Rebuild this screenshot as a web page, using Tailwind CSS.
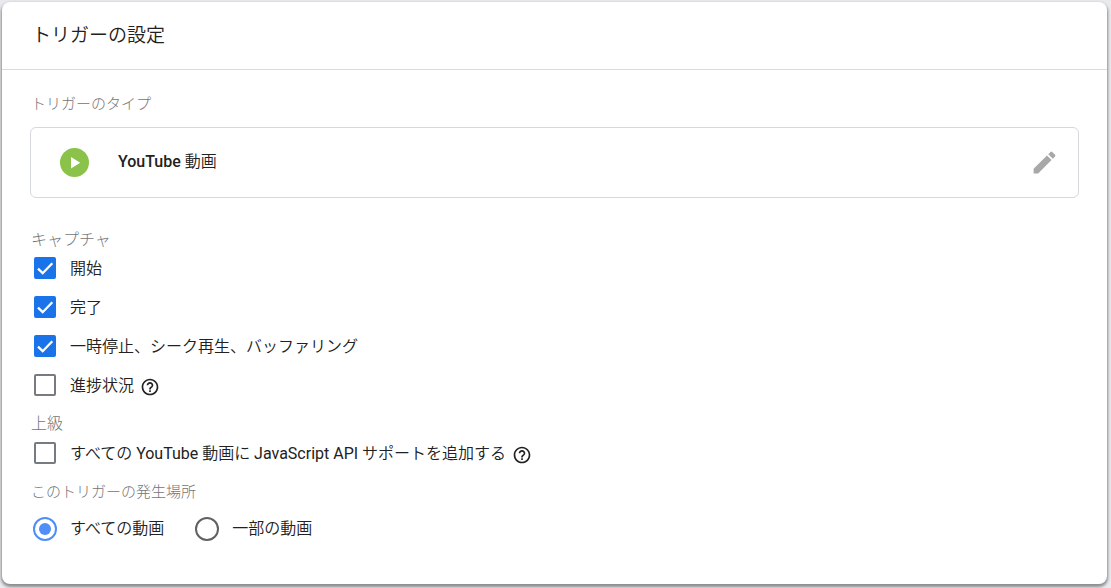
<!DOCTYPE html>
<html lang="ja">
  <head>
    <meta charset="UTF-8" />
    <meta name="viewport" content="width=device-width, initial-scale=1.0" />
    <title>トリガーの設定</title>
    <script src="https://cdn.jsdelivr.net/npm/@tailwindcss/browser@4"></script>
  </head>
  <body class="bg-[#e8eaed] min-h-screen flex pt-[2px] pl-[2px] pr-1 pb-1 font-['Roboto','Noto_Sans_CJK_JP',sans-serif] text-[#212121]">
    <main class="flex-1 bg-white rounded-lg shadow-[0_2px_3px_1px_rgba(0,0,0,0.4)]">
      <header class="h-[68px] flex items-center px-[30px] border-b border-[#dadce0]">
        <h1 class="text-[19px] leading-7 font-[350]">トリガーの設定</h1>
      </header>

      <form class="px-7 pt-[22px] pb-9 font-[350]">
        <h2 class="pl-px text-[15px] leading-6 font-light text-[#757575]">トリガーのタイプ</h2>
        <div class="mt-[11px] h-[71px] flex items-center pl-[29px] pr-[19px] border border-[#d5d8dd] rounded-md">
          <svg class="w-[29px] h-[29px]" viewBox="0 0 29 29">
            <circle cx="14.5" cy="14.5" r="14.5" fill="#8bc34a" />
            <path d="M11 9v11.500l9.200-5.750z" fill="#fff" />
          </svg>
          <p class="ml-[29px] pb-0.5 text-base"><span class="font-medium">YouTube</span> 動画</p>
          <button type="button" aria-label="編集" class="ml-auto">
            <svg class="w-[29px] h-[29px]" viewBox="0 0 24 24" fill="#a8a8a8">
              <path d="M3 17.250V21h3.750L17.810 9.940l-3.750-3.750L3 17.250zM20.710 7.040a1 1 0 0 0 0-1.410l-2.340-2.340a1 1 0 0 0-1.410 0l-1.830 1.830 3.750 3.750 1.830-1.830z" />
            </svg>
          </button>
        </div>

        <fieldset class="mt-[29px]">
          <legend class="pl-px pt-0.5 text-base leading-[22px] font-light text-[#757575]">キャプチャ</legend>
          <div class="flex flex-col gap-[5px]">
            <label class="h-[34px] flex items-center gap-[14px] pl-1">
              <span class="grid">
                <input type="checkbox" checked class="peer col-start-1 row-start-1 appearance-none w-[22px] h-[22px] rounded-xs border-2 border-[#80868b] checked:border-[#1a73e8] checked:bg-[#1a73e8]" />
                <svg class="col-start-1 row-start-1 w-[22px] h-[22px] pointer-events-none invisible peer-checked:visible" viewBox="0 0 22 22" fill="none" stroke="#fff" stroke-width="2.300">
                  <path d="M4 11.700l4.700 4.500L18.300 6.300" />
                </svg>
              </span>
              <span class="pt-0.5">開始</span>
            </label>
            <label class="h-[34px] flex items-center gap-[14px] pl-1">
              <span class="grid">
                <input type="checkbox" checked class="peer col-start-1 row-start-1 appearance-none w-[22px] h-[22px] rounded-xs border-2 border-[#80868b] checked:border-[#1a73e8] checked:bg-[#1a73e8]" />
                <svg class="col-start-1 row-start-1 w-[22px] h-[22px] pointer-events-none invisible peer-checked:visible" viewBox="0 0 22 22" fill="none" stroke="#fff" stroke-width="2.300">
                  <path d="M4 11.700l4.700 4.500L18.300 6.300" />
                </svg>
              </span>
              <span class="pt-0.5">完了</span>
            </label>
            <label class="h-[34px] flex items-center gap-[14px] pl-1">
              <span class="grid">
                <input type="checkbox" checked class="peer col-start-1 row-start-1 appearance-none w-[22px] h-[22px] rounded-xs border-2 border-[#80868b] checked:border-[#1a73e8] checked:bg-[#1a73e8]" />
                <svg class="col-start-1 row-start-1 w-[22px] h-[22px] pointer-events-none invisible peer-checked:visible" viewBox="0 0 22 22" fill="none" stroke="#fff" stroke-width="2.300">
                  <path d="M4 11.700l4.700 4.500L18.300 6.300" />
                </svg>
              </span>
              <span class="pt-0.5">一時停止、シーク再生、バッファリング</span>
            </label>
            <div class="h-[34px] flex items-center gap-[6px] pl-1">
              <label class="flex items-center gap-[14px]">
                <input type="checkbox" class="appearance-none w-[22px] h-[22px] rounded-xs border-2 border-[#757b80] checked:border-[#1a73e8] checked:bg-[#1a73e8]" />
                <span class="pt-0.5">進捗状況</span>
              </label>
              <button type="button" aria-label="ヘルプ" class="pt-1">
                <svg class="w-5 h-5" viewBox="0 0 24 24" fill="#212121">
                  <path d="M11 18h2v-2h-2v2zm1-16C6.480 2 2 6.480 2 12s4.480 10 10 10 10-4.480 10-10S17.520 2 12 2zm0 18c-4.410 0-8-3.590-8-8s3.590-8 8-8 8 3.590 8 8-3.590 8-8 8zm0-14c-2.210 0-4 1.790-4 4h2c0-1.100.9-2 2-2s2 .9 2 2c0 2-3 1.750-3 5h2c0-2.250 3-2.500 3-5 0-2.210-1.790-4-4-4z" />
                </svg>
              </button>
            </div>
          </div>
        </fieldset>

        <fieldset class="mt-[10px]">
          <legend class="pl-px text-base leading-6 font-light text-[#757575]">上級</legend>
          <div class="h-[34px] flex items-center gap-[6px] pl-1">
            <label class="flex items-center gap-[14px]">
              <input type="checkbox" class="appearance-none w-[22px] h-[22px] rounded-xs border-2 border-[#757b80] checked:border-[#1a73e8] checked:bg-[#1a73e8]" />
              <span class="pt-0.5">すべての <span class="font-normal">YouTube</span> 動画に <span class="font-normal">JavaScript API</span> サポートを追加する</span>
            </label>
            <button type="button" aria-label="ヘルプ" class="pt-1">
              <svg class="w-5 h-5" viewBox="0 0 24 24" fill="#212121">
                <path d="M11 18h2v-2h-2v2zm1-16C6.480 2 2 6.480 2 12s4.480 10 10 10 10-4.480 10-10S17.520 2 12 2zm0 18c-4.410 0-8-3.590-8-8s3.590-8 8-8 8 3.590 8 8-3.590 8-8 8zm0-14c-2.210 0-4 1.790-4 4h2c0-1.100.9-2 2-2s2 .9 2 2c0 2-3 1.750-3 5h2c0-2.250 3-2.500 3-5 0-2.210-1.790-4-4-4z" />
              </svg>
            </button>
          </div>
        </fieldset>

        <fieldset class="mt-[9px]">
          <legend class="pl-px pt-0.5 text-[15px] leading-[22px] font-light text-[#757575]">このトリガーの発生場所</legend>
          <div class="mt-[9px] h-[34px] flex items-center gap-[31px] pl-[3px]">
            <label class="flex items-center gap-[13px]">
              <input type="radio" name="fire" checked class="appearance-none w-[24px] h-[24px] rounded-full border-2 p-1 bg-clip-content border-[#616161] checked:border-[#4f8df7] checked:bg-[#4f8df7]" />
              すべての動画
            </label>
            <label class="flex items-center gap-[13px]">
              <input type="radio" name="fire" class="appearance-none w-[24px] h-[24px] rounded-full border-2 p-1 bg-clip-content border-[#616161] checked:border-[#4f8df7] checked:bg-[#4f8df7]" />
              一部の動画
            </label>
          </div>
        </fieldset>
      </form>
    </main>
  </body>
</html>
